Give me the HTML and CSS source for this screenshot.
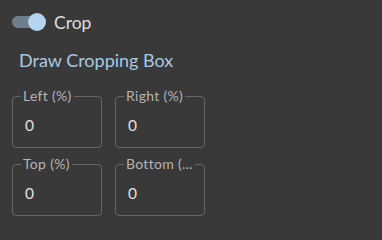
FILE: index.html
```html
<!DOCTYPE html>
<html>
<head>
<meta charset="utf-8">
<link rel="stylesheet" href="styles.css">
</head>
<body>
<div class="panel">
  <div class="toggle-row">
    <span class="switch"><span class="track"></span><span class="thumb"></span></span>
    <span class="toggle-label">Crop</span>
  </div>
  <div class="link">Draw Cropping Box</div>
  <div class="grid">
    <fieldset class="field"><legend>Left (%)</legend><div class="value">0</div></fieldset>
    <fieldset class="field"><legend>Right (%)</legend><div class="value">0</div></fieldset>
    <fieldset class="field"><legend>Top (%)</legend><div class="value">0</div></fieldset>
    <fieldset class="field"><legend>Bottom (…</legend><div class="value">0</div></fieldset>
  </div>
</div>
</body>
</html>
```
FILE: styles.css
```css
html, body {
  margin: 0;
  padding: 0;
  background: #393939;
  width: 382px;
  height: 220px;
  overflow: hidden;
}
body {
  font-family: Lato, "Open Sans", sans-serif;
  color: #dcdcdc;
}
.panel {
  padding: 13px 12px 0 12px;
}
.toggle-row {
  display: flex;
  align-items: center;
  height: 18px;
}
.switch {
  position: relative;
  width: 34px;
  height: 18px;
  flex: none;
}
.track {
  position: absolute;
  left: 0;
  top: 3px;
  width: 32px;
  height: 12px;
  border-radius: 6px;
  background: #6d7e8c;
}
.thumb {
  position: absolute;
  right: 0;
  top: 0;
  width: 18px;
  height: 18px;
  border-radius: 50%;
  background: #b5d5ee;
}
.toggle-label {
  margin-left: 8px;
  font-size: 17.5px;
  color: #dedede;
}
.link {
  margin-top: 18px;
  margin-left: 7px;
  font-size: 18px;
  color: #a9c9e2;
  line-height: 22px;
}
.grid {
  display: grid;
  grid-template-columns: 90px 90px;
  column-gap: 13px;
  row-gap: 9px;
  margin-top: 18px;
}
.field {
  margin: 0;
  min-width: 0;
  border: 1px solid #666666;
  border-radius: 4px;
  padding: 0 11px 0 11px;
  height: 59px;
  box-sizing: border-box;
}
.field legend {
  font-size: 14px;
  letter-spacing: 0.3px;
  color: #b4b4b4;
  padding: 0 2px;
  margin-left: -3px;
  line-height: 14px;
  white-space: nowrap;
}
.value {
  font-size: 15.5px;
  color: #e0e0e0;
  margin-top: 13px;
  line-height: 18px;
  padding-left: 1px;
}
```
